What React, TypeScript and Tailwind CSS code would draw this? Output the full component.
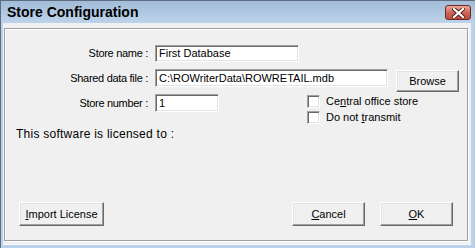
import React from "react";

const font = { fontFamily: '"Liberation Sans", Arial, sans-serif' };

function Sunken({ w, h, value }: { w: string; h: string; value: string }) {
  return (
    <div
      className={`${w} ${h} bg-white border border-t-[#a0a0a0] border-l-[#a0a0a0] border-b-white border-r-white shadow-[inset_1px_1px_0_#696969,inset_-1px_-1px_0_#e3e3e3] flex items-center pl-[3px] text-[11px] text-black leading-none overflow-hidden whitespace-nowrap`}
    >
      {value}
    </div>
  );
}

function Button({ w, h, children }: { w: string; h: string; children: React.ReactNode }) {
  return (
    <div
      className={`${w} ${h} bg-[#f0f0f0] border border-t-white border-l-white border-b-[#696969] border-r-[#696969] shadow-[inset_-1px_-1px_0_#a0a0a0,inset_1px_1px_0_#e3e3e3] flex items-center justify-center text-[11px] text-black leading-none`}
    >
      {children}
    </div>
  );
}

function Check({ children }: { children: React.ReactNode }) {
  return (
    <div className="flex items-center h-[16px]">
      <div className="w-[13px] h-[13px] bg-white border border-t-[#a0a0a0] border-l-[#a0a0a0] border-b-white border-r-white shadow-[inset_1px_1px_0_#696969,inset_-1px_-1px_0_#e3e3e3]" />
      <span className="ml-[6px] text-[11px] leading-none text-black">{children}</span>
    </div>
  );
}

export default function App() {
  return (
    <div
      style={font}
      className="w-[475px] h-[248px] flex flex-col bg-[#b9d1ea] border-l border-t border-[#5e6e80] overflow-hidden"
    >
      {/* Title bar */}
      <div className="h-[22px] flex items-center justify-between bg-gradient-to-b from-[#a3bcd8] to-[#bcd3ea] pl-[6px] pr-[4px]">
        <span className="text-[14px] font-bold text-black leading-none">Store Configuration</span>
        <div className="w-[26px] h-[15px] rounded-[3px] border border-[#6b2a26] bg-gradient-to-b from-[#e9a99c] via-[#d0665a] to-[#c0483c] flex items-center justify-center mt-[1px]">
          <svg width="13" height="10" viewBox="0 0 13 10">
            <path
              d="M2 1 L11 9 M11 1 L2 9"
              stroke="#4a2020"
              strokeWidth="4"
              strokeLinecap="square"
            />
            <path
              d="M2 1 L11 9 M11 1 L2 9"
              stroke="#ffffff"
              strokeWidth="2.2"
              strokeLinecap="square"
            />
          </svg>
        </div>
      </div>

      {/* Client area */}
      <div className="ml-[2px] mr-[4px] h-[222px] bg-[#f0f0f0] pt-[5px] pl-[1px] pr-[3px] pb-[3px] flex border-b border-[#f8fbfe]">
        <div className="flex-1 flex flex-col border border-[#a0a0a0] shadow-[inset_1px_1px_0_#fff,1px_1px_0_#fff]">
          {/* Store name */}
          <div className="mt-[16px] flex items-center h-[17px]">
            <span className="w-[143px] text-right text-[11px] leading-none text-black tracking-[-0.3px]">Store name :</span>
            <div className="ml-[7px]">
              <Sunken w="w-[144px]" h="h-[17px]" value="First Database" />
            </div>
          </div>

          {/* Shared data file */}
          <div className="mt-[7px] flex items-start h-[22px]">
            <span className="w-[143px] h-[18px] flex items-center justify-end text-[11px] leading-none text-black tracking-[-0.3px]">
              Shared data file :
            </span>
            <div className="ml-[7px]">
              <Sunken w="w-[233px]" h="h-[18px]" value="C:\ROWriterData\ROWRETAIL.mdb" />
            </div>
            <div className="ml-[8px] mt-[1px]">
              <Button w="w-[63px]" h="h-[22px]">Browse</Button>
            </div>
          </div>

          {/* Store number + checkboxes */}
          <div className="mt-[3px] flex items-start">
            <span className="w-[143px] h-[18px] flex items-center justify-end text-[11px] leading-none text-black tracking-[-0.3px]">
              Store number :
            </span>
            <div className="ml-[7px]">
              <Sunken w="w-[64px]" h="h-[18px]" value="1" />
            </div>
            <div className="ml-[88px] mt-[-1px] flex flex-col">
              <Check>
                Ce<span className="underline">n</span>tral office store
              </Check>
              <Check>
                Do not <span className="underline">t</span>ransmit
              </Check>
            </div>
          </div>

          <div className="mt-[3px] pl-[11px] text-[12px] leading-[13px] text-black tracking-[0.25px]">
            This software is licensed to :
          </div>

          {/* Buttons */}
          <div className="mt-auto mb-[14px] flex px-[14px]">
            <Button w="w-[85px]" h="h-[24px]">
              <span>
                <span className="underline">I</span>mport License
              </span>
            </Button>
            <div className="ml-auto flex gap-[15px]">
              <Button w="w-[73px]" h="h-[24px]">
                <span>
                  <span className="underline">C</span>ancel
                </span>
              </Button>
              <Button w="w-[73px]" h="h-[24px]">
                <span>
                  <span className="underline">O</span>K
                </span>
              </Button>
            </div>
          </div>
        </div>
      </div>
    </div>
  );
}
